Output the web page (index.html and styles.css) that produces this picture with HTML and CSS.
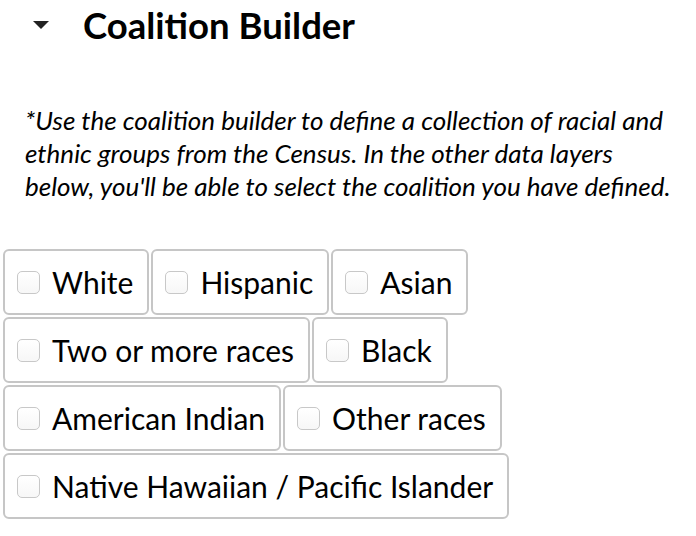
FILE: index.html
```html
<!DOCTYPE html>
<html>
<head>
<meta charset="utf-8">
<link rel="stylesheet" href="styles.css">
</head>
<body>
<div class="panel">
  <div class="header">
    <span class="caret"></span>
    <h2 class="title">Coalition Builder</h2>
  </div>
  <p class="note">*Use the coalition builder to define a collection of racial and ethnic groups from the Census. In the other data layers below, you'll be able to select the coalition you have defined.</p>
  <div class="groups">
    <label class="group"><span class="box" role="checkbox" aria-checked="false"></span><span>White</span></label>
    <label class="group"><span class="box" role="checkbox" aria-checked="false"></span><span>Hispanic</span></label>
    <label class="group"><span class="box" role="checkbox" aria-checked="false"></span><span>Asian</span></label>
    <label class="group"><span class="box" role="checkbox" aria-checked="false"></span><span>Two or more races</span></label>
    <label class="group"><span class="box" role="checkbox" aria-checked="false"></span><span>Black</span></label>
    <label class="group"><span class="box" role="checkbox" aria-checked="false"></span><span>American Indian</span></label>
    <label class="group"><span class="box" role="checkbox" aria-checked="false"></span><span>Other races</span></label>
    <label class="group"><span class="box" role="checkbox" aria-checked="false"></span><span>Native Hawaiian / Pacific Islander</span></label>
  </div>
</div>
</body>
</html>
```

FILE: styles.css
```css
html, body {
  margin: 0;
  padding: 0;
  background: #fff;
}
body {
  font-family: "Lato", "Noto Sans", sans-serif;
  color: #000;
}
.panel {
  width: 696px;
}
.header {
  display: flex;
  align-items: center;
  height: 50px;
  padding-left: 33px;
}
.caret {
  width: 0;
  height: 0;
  border-left: 8px solid transparent;
  border-right: 8px solid transparent;
  border-top: 8px solid #222;
  margin-right: 34px;
}
.title {
  margin: 0;
  font-size: 36.5px;
  font-weight: 700;
  line-height: 1;
}
.note {
  margin: 54px 0 0 25px;
  padding-right: 14px;
  font-style: italic;
  font-size: 26px;
  line-height: 33px;
}
.groups {
  display: flex;
  flex-wrap: wrap;
  gap: 2px;
  padding-left: 3px;
  margin-top: 46px;
}
.group {
  display: flex;
  align-items: center;
  height: 62px;
  padding: 0 14px 0 12px;
  border: 2px solid #c6c6c6;
  border-radius: 6px;
  font-size: 30px;
}
.box {
  display: block;
  box-sizing: border-box;
  flex-shrink: 0;
  width: 23px;
  height: 23px;
  margin: 0 12px 0 0;
  border: 1px solid #c8c8c8;
  border-radius: 5px;
  background: linear-gradient(#fff, #f7f7f7);
}
```
